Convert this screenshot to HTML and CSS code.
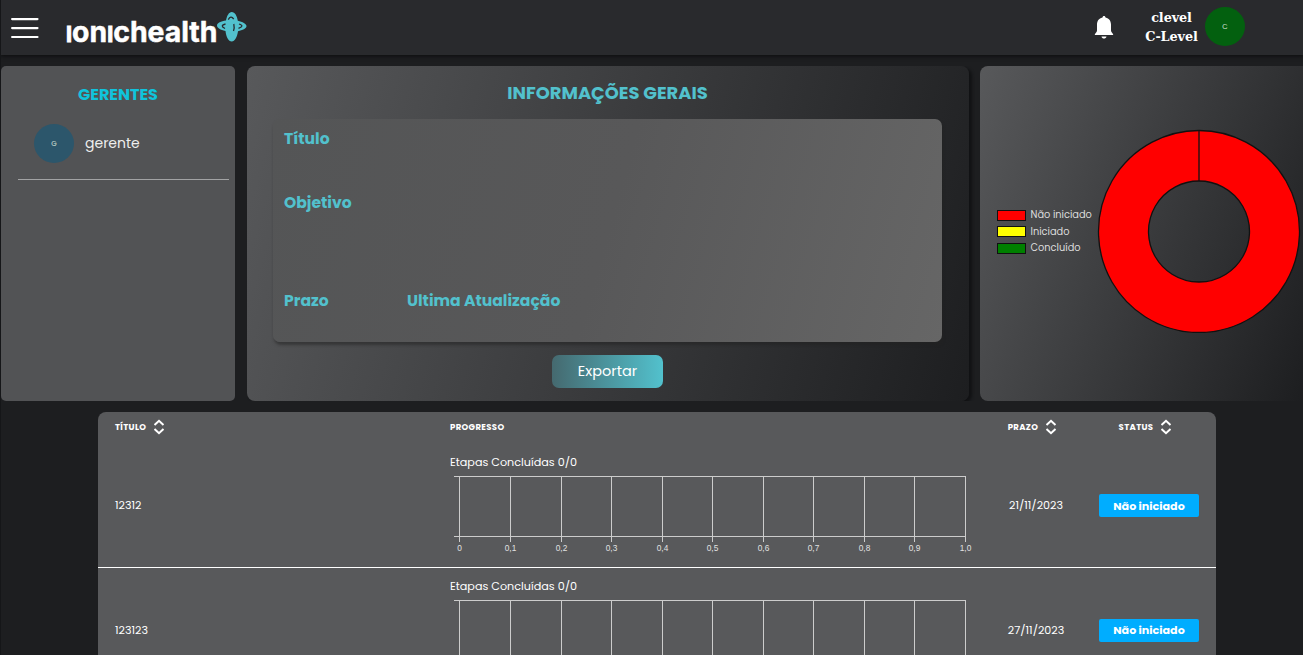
FILE: index.html
```html
<!DOCTYPE html>
<html lang="pt-BR">
<head>
<meta charset="utf-8">
<title>IonicHealth</title>
<link rel="stylesheet" href="styles.css">
</head>
<body>
<header class="topbar">
  <svg class="menu" width="28" height="24" viewBox="0 0 28 24"><path d="M1.100 3.100H26.500M1.100 12.100H26.500M1.100 21H26.500" stroke="#fff" stroke-width="2.200" stroke-linecap="round"/></svg>
  <svg class="logo" width="182" height="40" viewBox="66 8 182 40">
    <text class="wordmark" x="66" y="41.500" textLength="151.500" lengthAdjust="spacingAndGlyphs"><tspan class="stem">I</tspan>on<tspan class="stem">I</tspan>chealth</text>
    <path fill="#52c1cd" d="M226 20.500C227 15.500 229 12 231.700 12C235 12 237 16 237.800 20.700C242.500 21.700 246.500 23.800 246.500 26C246.500 28.500 242.500 30.200 238 31.200C237.200 37 234.800 41.500 231.700 41.500C228.500 41.500 226.200 37 225.500 31C220.500 30 217 28 217 25.500C217 23 221 21 226 20.500Z"/>
    <path class="gap" d="M228.300 19.600C229.800 16.700 231.800 16 233.700 19.200M225.500 24C221.500 25 221 26.500 225 28.500M233.800 24C234.500 27 234.200 29 233.500 31M239 24C243 25.300 243 26.700 238.500 28.300"/>
  </svg>
  <svg class="bell" width="20" height="24" viewBox="0 0 20 24"><path fill="#fff" d="M10 0C9.100 0 8.600.7 8.500 1.500C4.700 2.300 3 5.200 3 8.500V14.500C3 16.500 1 17.300.7 19H19.300C19 17.300 17 16.500 17 14.500V8.500C17 5.200 15.300 2.300 11.500 1.500C11.400.7 10.900 0 10 0ZM7.500 20.500H12.500C12.200 22 11.200 22.600 10 22.600S7.800 22 7.500 20.500Z"/></svg>
  <div class="who"><span>clevel</span><span>C-Level</span></div>
  <div class="avatar avatar-user">C</div>
</header>
<main>
  <div class="panels">
    <section class="managers">
      <h2 class="t t-managers">GERENTES</h2>
      <div class="manager"><div class="avatar avatar-manager">G</div><span class="name">gerente</span></div>
    </section>
    <section class="info">
      <h2 class="t t-info">INFORMAÇÕES GERAIS</h2>
      <div class="details">
        <h3 class="f-title">Título</h3>
        <h3 class="f-goal">Objetivo</h3>
        <div class="dates"><h3 class="f-due">Prazo</h3><h3 class="f-update">Ultima Atualização</h3></div>
      </div>
      <button class="export">Exportar</button>
    </section>
    <section class="chart">
      <ul class="legend">
        <li><i class="sw red"></i><span>Não iniciado</span></li>
        <li><i class="sw yellow"></i><span>Iniciado</span></li>
        <li><i class="sw green"></i><span>Concluído</span></li>
      </ul>
      <svg class="donut" width="204" height="204" viewBox="0 0 204 204"><g stroke="#111" stroke-width="1.300"><path fill="red" fill-rule="evenodd" d="M102 1.500A100.500 101 0 1 1 101.990 1.500ZM102 52A50.500 50.500 0 1 0 102.010 52Z"/><path d="M102 1.500V52"/></g></svg>
    </section>
  </div>
  <section class="table">
    <div class="row head">
      <div class="cell"><span class="h">TÍTULO</span><svg class="sort" width="12" height="16" viewBox="0 0 12 16"><path d="M1.500 6L6 1.800L10.500 6M1.500 10L6 14.200L10.500 10"/></svg></div>
      <div class="cell"><span class="h">PROGRESSO</span></div>
      <div class="cell mid due"><span class="h">PRAZO</span><svg class="sort" width="12" height="16" viewBox="0 0 12 16"><path d="M1.500 6L6 1.800L10.500 6M1.500 10L6 14.200L10.500 10"/></svg></div>
      <div class="cell mid state"><span class="h">STATUS</span><svg class="sort" width="12" height="16" viewBox="0 0 12 16"><path d="M1.500 6L6 1.800L10.500 6M1.500 10L6 14.200L10.500 10"/></svg></div>
    </div>
    <div class="row item">
      <div class="cell id">12312</div>
      <div class="progress"><span class="steps">Etapas Concluídas 0/0</span><svg class="grid" width="530" height="82" data-labels="yes"></svg></div>
      <div class="cell mid date">21/11/2023</div>
      <div class="cell mid"><span class="status">Não iniciado</span></div>
    </div>
    <div class="row item last">
      <div class="cell id">123123</div>
      <div class="progress"><span class="steps">Etapas Concluídas 0/0</span><svg class="grid" width="530" height="55"></svg></div>
      <div class="cell mid date">27/11/2023</div>
      <div class="cell mid"><span class="status">Não iniciado</span></div>
    </div>
  </section>
</main>
<script src="charts.js"></script>
</body>
</html>
```
FILE: charts.js
```js
// Draws the empty progress axes: eleven ticks from 0 to 1,0.
const ticks = [9, 60, 111, 161, 212, 262, 313, 363, 414, 464, 515];
document.querySelectorAll('.grid').forEach(svg => {
  let out = '<path d="M4 .5H516M4 60.5H516"/>';
  ticks.forEach((t, i) => {
    const x = t + 0.5;
    const label = i === 0 ? '0' : i === 10 ? '1,0' : '0,' + i;
    out += `<path d="M${x} .5V66"/>`;
    if (svg.dataset.labels) out += `<text x="${x}" y="75" text-anchor="middle">${label}</text>`;
  });
  svg.innerHTML = out;
});
```
FILE: styles.css
```css
* { box-sizing: border-box; }
body { margin: 0; height: 655px; overflow: hidden; background: #1d1e20; color: #fff; font-family: Poppins, Inter, sans-serif; border-left: 1px solid #151618; }
h2, h3, ul { margin: 0; padding: 0; }
.topbar { height: 55px; background: #292a2d; box-shadow: 0 1px 4px #0c0c0d; display: flex; align-items: flex-start; }
.menu { margin: 16px 0 0 10px; }
.logo { margin: 8px 0 0 27px; }
.wordmark { font: 700 29px Inter, sans-serif; fill: #fff; stroke: #fff; stroke-width: .5px; }
.stem { font-size: 22px; stroke-width: 1px; }
.gap { fill: none; stroke: #292a2d; stroke-width: 1.300; }
.bell { margin: 16px 0 0 846px; }
.who { width: 90px; margin: 8px 0 0 12.500px; display: flex; flex-direction: column; align-items: center; font: 700 12.800px/19px "DejaVu Serif", serif; letter-spacing: -.1px; }
.avatar { width: 40px; height: 39px; border-radius: 50%; display: flex; align-items: center; justify-content: center; font-size: 7px; color: #d7e3d8; flex: none; }
.avatar-user { background: #03600f; margin: 7px 0 0 -11.500px; }
.avatar-manager { background: #2c566b; }
.panels { margin-top: 11px; height: 335px; display: flex; }
.managers { width: 234px; background: #525355; border-radius: 5px; margin-right: 12px; padding-top: 18px; flex: none; }
.t { text-align: center; font-weight: 700; }
.t-managers { color: #0fc4dc; font-size: 16px; line-height: 22px; }
.manager { margin: 18px 6px 0 17px; height: 56px; padding-left: 16px; display: flex; align-items: flex-start; gap: 11px; border-bottom: 1px solid #a2a3a4; }
.name { font-size: 14px; line-height: 39px; color: #eee; }
.info { width: 722px; flex: none; margin-right: 11px; border-radius: 8px; background: linear-gradient(106deg, #58595b, #1d1e20); box-shadow: 3px 2px 3px #111214; clip-path: inset(0 -8px 0 0); padding: 14px 27px 0 26px; display: flex; flex-direction: column; align-items: center; color: #52c1cd; }
.t-info { font-size: 17.900px; line-height: 26px; }
.details { width: 669px; height: 223px; margin-top: 13px; border-radius: 7px; background: linear-gradient(106deg, #545556, #585859 50%, #666666); box-shadow: 1px 3px 3px #2228; padding: 8px 11px; }
.details h3 { font-size: 15.600px; line-height: 24px; font-weight: 700; }
.f-goal { margin-top: 40px; }
.dates { display: flex; margin-top: 74px; }
.f-due { width: 123px; }
.export { width: 111px; height: 33px; margin-top: 13px; border: 0; border-radius: 7px; color: #fff; font: 14.500px/31px Poppins, Inter, sans-serif; background: linear-gradient(90deg, #45696f, #52c1cd); padding: 0; }
.chart { flex: 1; border-radius: 8px 0 0 8px; background: linear-gradient(111deg, #58595b, #1d1e20); display: flex; align-items: center; padding-left: 17px; }
.legend { list-style: none; width: 100px; flex: none; margin-top: -4px; }
.legend li { height: 16.500px; display: flex; align-items: center; gap: 4.500px; font-size: 9.800px; color: #ddd; white-space: nowrap; }
.sw { width: 29px; height: 11px; border: 1px solid #111; }
.red { background: red; }
.yellow { background: #ff0; }
.green { background: green; }
.donut { flex: none; margin-top: -5px; }
.table { width: 1118px; height: 243px; overflow: hidden; margin: 11px 0 0 97px; border-radius: 8px 8px 0 0; background: #58595b; }
.row { display: grid; grid-template-columns: 352px 533px 106px 127px; }
.cell { display: flex; align-items: center; }
.cell:first-child { padding-left: 17px; }
.mid { justify-content: center; }
.due { padding-right: 7px; }
.state { padding-right: 14px; }
.head { height: 30px; }
.h { font-size: 8.500px; font-weight: 700; letter-spacing: .35px; }
.sort { margin-left: 7px; fill: none; stroke: #fff; stroke-width: 2; }
.item { height: 126px; border-bottom: 1px solid #fff; }
.item .cell { padding-top: 1px; }
.last { height: 87px; border: 0; }
.progress { display: flex; flex-direction: column; padding-top: 11px; }
.last .progress { padding-top: 9px; }
.last .cell { height: 124px; padding-top: 0; }
.steps { font-size: 11.200px; line-height: 18px; height: 23px; }
.grid { stroke: #ccc; fill: none; }
.grid text { stroke: none; fill: #e2e2e2; font: 8.300px "Liberation Sans", sans-serif; }
.id, .date { font-size: 11.100px; }
.status { width: 100px; height: 23px; border-radius: 2px; background: #00adff; text-align: center; font-weight: 700; font-size: 11.100px; line-height: 24px; margin-left: -7px; }
.last .status { line-height: 23px; }
```
